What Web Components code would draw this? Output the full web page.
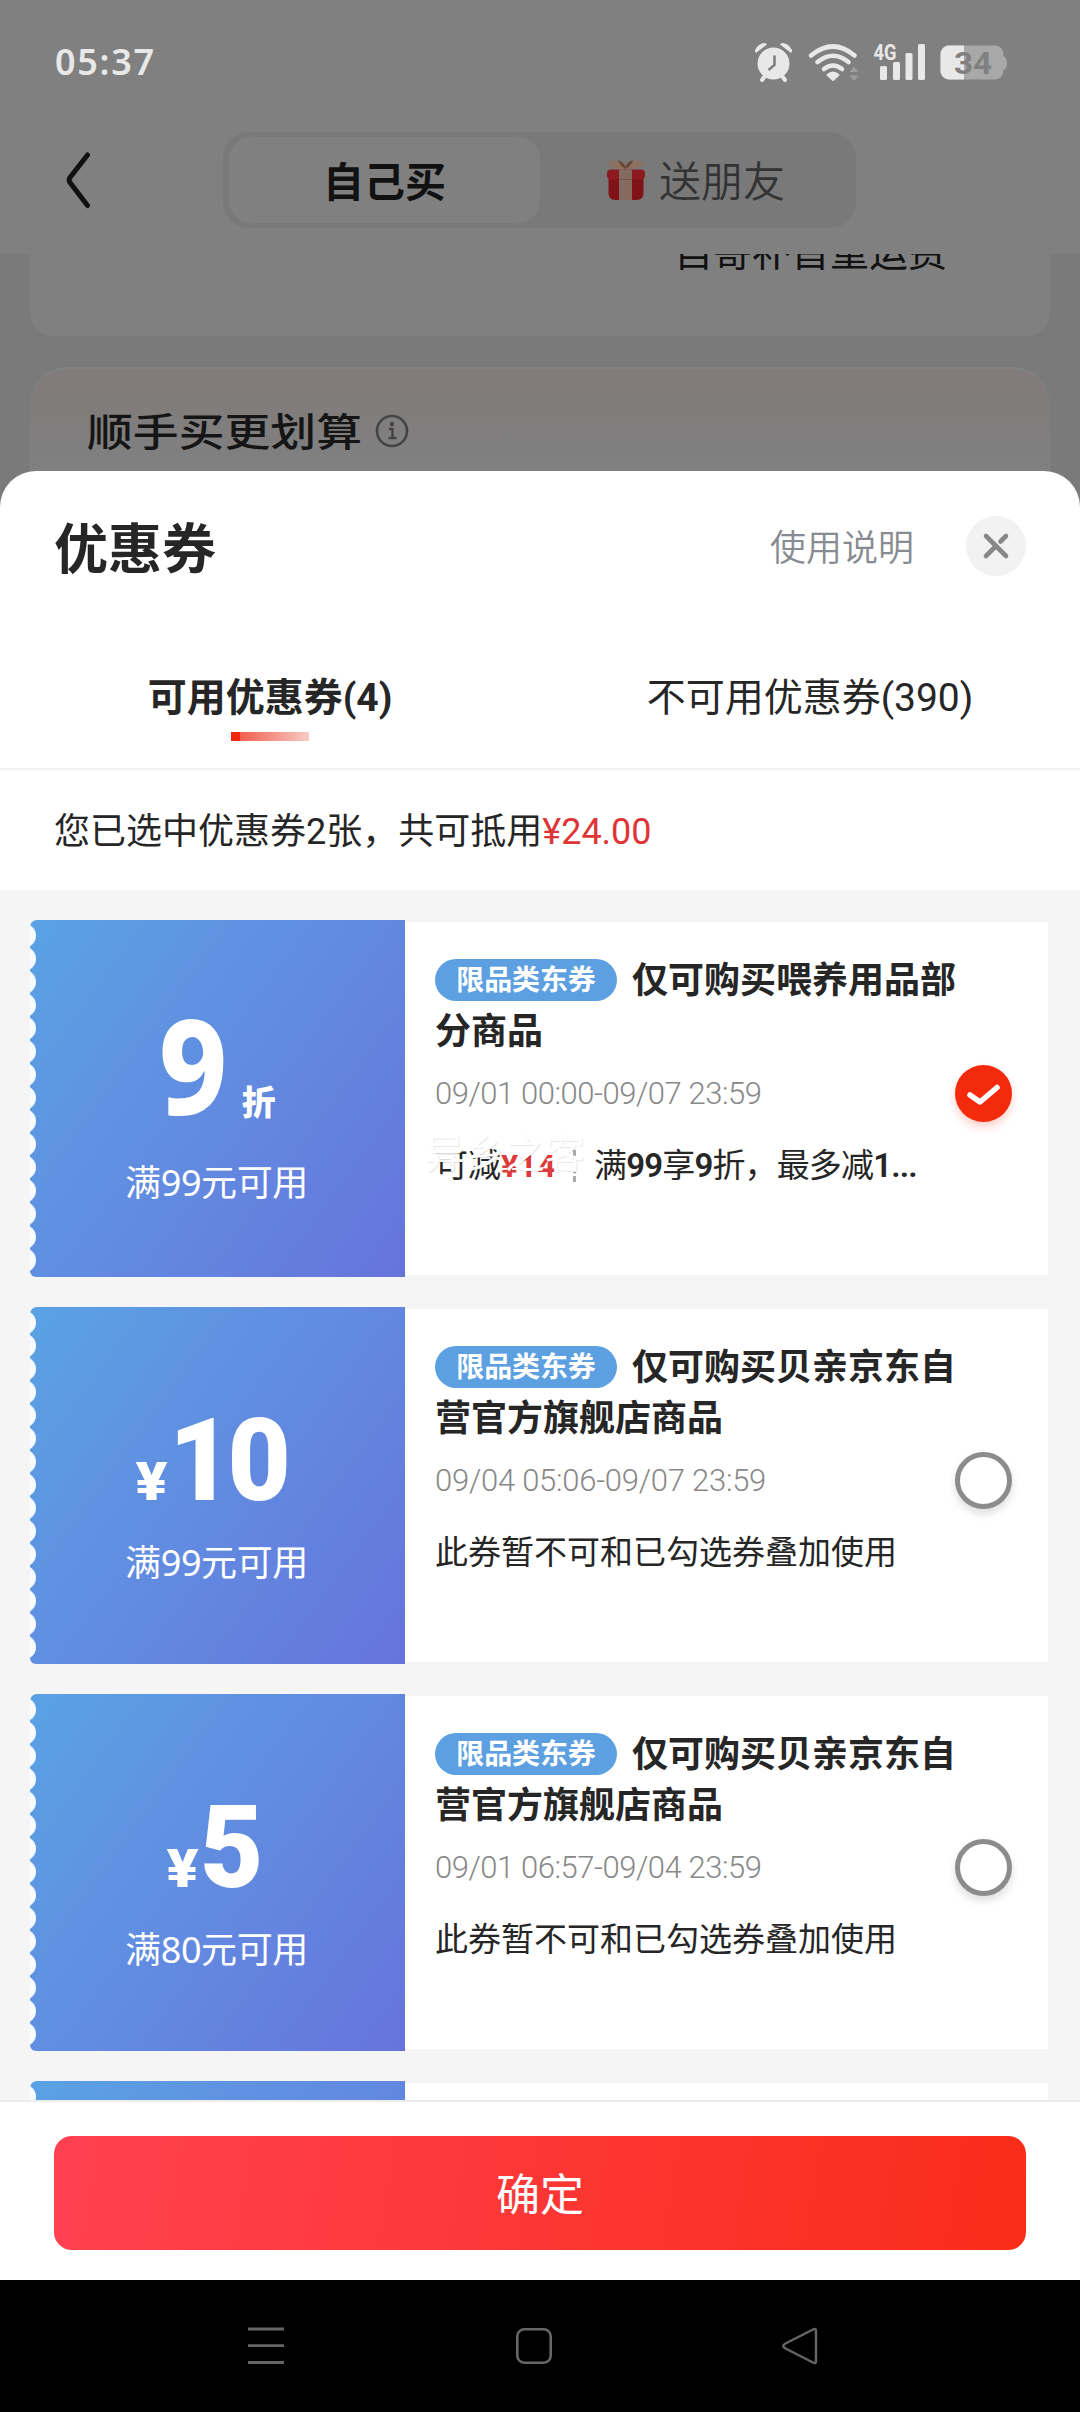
<!DOCTYPE html>
<html lang="zh-CN">
<head>
<meta charset="utf-8">
<title>优惠券</title>
<style>
html,body{margin:0;padding:0;background:#000}
body{width:1080px;height:2412px;overflow:hidden;font-family:Roboto,"Noto Sans CJK SC",sans-serif;color:#262626}
</style>
</head>
<body>
<coupon-app></coupon-app>
<script>
const define=(name,html,setup)=>{
  const t=document.createElement('template');
  t.innerHTML=html;
  customElements.define(name,class extends HTMLElement{
    constructor(){super();this.attachShadow({mode:'open'}).append(t.content.cloneNode(true));}
    connectedCallback(){if(setup)setup(this,this.shadowRoot);}
  });
};

define('status-bar',`
<style>
:host{display:flex;align-items:center;justify-content:space-between;height:124px;padding:0 73px 0 55px;box-sizing:border-box;color:#e8e8e8}
.time{font:600 36px/40px "Noto Sans",sans-serif;letter-spacing:1.7px}
.icons{display:flex;gap:15px;align-items:center}
svg{display:block;overflow:visible}
</style>
<span class="time">05:37</span>
<div class="icons">
<svg width="38" height="40" viewBox="754 42 38 40"><g fill="#e8e8e8"><circle cx="772.5" cy="63.500" r="16"/><path d="M755 53 a3 3 0 0 1-.8-3.200 q3-6 9-6.800 a3 3 0 0 1 2.800 1.500z M790 53 a3 3 0 0 0 .8-3.200 q-3-6-9-6.800 a3 3 0 0 0-2.800 1.500z"/></g><path d="M764 76 l-3 4 M781 76 l3 4" stroke="#e8e8e8" stroke-width="4" stroke-linecap="round"/><path d="M773.500 55.500 V65 L767.500 70" fill="none" stroke="#808080" stroke-width="2.600"/></svg>
<svg width="51" height="40" viewBox="808 42 51 40"><g fill="none" stroke="#e8e8e8" stroke-width="4.600" stroke-linecap="round"><path d="M811 55.500 Q833 37.500 854.500 55.500"/><path d="M817.500 62 Q833 49.500 848.500 62"/><path d="M824 69 Q833 62 842 69"/></g><path d="M833 80 L827.500 75 Q833 70 838.500 75z" fill="#e8e8e8" stroke="#e8e8e8" stroke-width="2" stroke-linejoin="round"/><path d="M849.500 72 l4.500-5.500 4.500 5.500z M849.500 75.500 l4.500 5.500 4.500-5.500z" fill="#9d9d9d"/></svg>
<svg width="51" height="40" viewBox="873 42 51 40" fill="#e8e8e8"><text x="872.500" y="60" font-family="Roboto,sans-serif" font-weight="700" font-size="22.500" textLength="23" lengthAdjust="spacingAndGlyphs">4G</text><rect x="879" y="66" width="7" height="14" rx="1.500"/><rect x="892" y="62" width="7" height="18" rx="1.500"/><rect x="904.500" y="53" width="7" height="27" rx="1.500"/><rect x="917" y="44" width="7" height="36" rx="1.500"/></svg>
<svg width="67" height="40" viewBox="940 43 67 40"><path d="M1003 57 q4 1 4 7 t-4 7z" fill="#a8a8a8"/><rect x="940.500" y="46.500" width="63" height="34" rx="8.500" fill="#a8a8a8"/><path d="M964 46.500 V80.500 H949 a8.500 8.500 0 0 1-8.500-8.500 V55 a8.500 8.500 0 0 1 8.500-8.500z" fill="#e8e8e8"/><text x="954" y="75" font-family="Roboto,sans-serif" font-weight="700" font-size="32" textLength="38" lengthAdjust="spacingAndGlyphs" fill="#808080">34</text></svg>
</div>`);

define('page-header',`
<style>
:host{display:flex;height:130px;padding-left:66px;box-sizing:border-box;align-items:flex-start}
.back{margin:26px 132px 0 0;display:block}
.seg{display:flex;width:633px;height:96px;margin-top:8px;border-radius:26px;background:#797979;box-sizing:border-box;padding:5px 6px}
.on{width:311px;height:86px;border-radius:22px;background:#808080;display:flex;align-items:center;justify-content:center;font-weight:700;font-size:41px;color:#111}
.off{flex:1;display:flex;align-items:center;padding-left:67px;gap:14px;font-size:42px;color:#333;font-weight:350}
.seg span{line-height:50px;margin-top:5px}
</style>
<svg class="back" width="25" height="60" viewBox="0 0 25 60"><path d="M21.500 5 L4 27.500 Q2.300 30 4 32.500 L21.500 55.500" fill="none" stroke="#111" stroke-width="5" stroke-linecap="round"/></svg>
<div class="seg"><div class="on"><span>自己买</span></div><div class="off">
<svg width="38" height="42" viewBox="0 0 38 42"><path d="M1.500 17h35v17q0 7-7 7h-21q-7 0-7-7z" fill="#801317"/><rect x="0" y="10.500" width="38" height="10" rx="4" fill="#8c1a20"/><path d="M12 10.500h13v30.500h-13z" fill="#846a60"/><path d="M12 20.500h13" stroke="#735448"/><path d="M18.500 10 Q8 11 3 7 Q0 3 4 1 Q12 1 18.500 10 Q25 1 33 1 Q38 3 35 7 Q29 11 18.500 10z" fill="#8b7064"/><path d="M18.500 10 Q13 7 11 1 Q17 3 18.500 8 Q20 3 26 1 Q24 7 18.500 10z" fill="#6e452f"/></svg>
<span>送朋友</span></div></div>`);

define('page-backdrop',`
<style>
:host{display:block;height:266px;background:#7a7a7a;padding:0 30px;box-sizing:border-box;overflow:hidden}
.ship{height:82px;background:#808080;border-radius:0 0 24px 24px;overflow:hidden;display:flex;justify-content:flex-end;padding-right:103px}
.ship span{font-size:39px;line-height:39px;height:39px;margin-top:-20px;color:#111}
.more{margin-top:31px;height:160px;border-radius:38px 38px 0 0;background:linear-gradient(#827b7b 0,#807d7d 50px,#808080 95px);border-top:2px solid #838383;box-sizing:border-box;display:flex;align-items:flex-start;padding:42px 0 0 57px}
.more span{font-size:39px;line-height:44px;font-weight:500;color:#151515;transform:scaleX(1.175);transform-origin:0 50%;width:288px;white-space:nowrap}
svg{display:block;margin-top:3px}
</style>
<div class="ship"><span>自寄补首重运费</span></div>
<div class="more"><span>顺手买更划算</span><svg width="34" height="34" viewBox="0 0 34 34"><circle cx="17" cy="17" r="15" fill="none" stroke="#444" stroke-width="2.600"/><circle cx="17" cy="10" r="2.200" fill="#444"/><path d="M14 15h3.500v9M13.500 24h8" fill="none" stroke="#444" stroke-width="2.400"/></svg></div>`);

define('sheet-header',`
<style>
:host{display:flex;height:150px;padding:0 54px 0 54px;align-items:center;box-sizing:border-box}
h1{margin:10px 0 0;font-size:54px;line-height:60px;font-weight:700;flex:1}
a{font-size:36px;line-height:40px;color:#888b91;font-weight:350;margin:6px 52px 0 0}
svg{display:block}
</style>
<h1>优惠券</h1><a>使用说明</a>
<svg width="60" height="60" viewBox="0 0 60 60"><circle cx="30" cy="30" r="30" fill="#f2f2f2"/><path d="M20 20 L40 40 M20 40 L28 32 M34.500 25.500 L40 20" stroke="#888" stroke-width="4.600" stroke-linecap="round"/></svg>`);

define('sheet-tabs',`
<style>
:host{display:flex;height:149px;border-bottom:2px solid #f1f1f1;box-sizing:border-box}
.tab{flex:1;display:flex;flex-direction:column;align-items:center;padding-top:55px;font-size:39px;line-height:44px;white-space:pre}
.on{font-weight:700}
.bar{width:78px;height:9px;margin-top:12px;background:linear-gradient(90deg,#f0250d 9px,#f2604f 9px,#f7cbc5)}
</style>
<div class="tab on"><span>可用优惠券(4)</span><div class="bar"></div></div><div class="tab"><span>不可用优惠券(390)</span></div>`);

define('coupon-summary',`
<style>
:host{display:flex;align-items:center;height:120px;padding:4px 54px 0;box-sizing:border-box;font-size:36px;line-height:42px}
::slotted(b){font-weight:400;color:#de3537}
</style><span><slot></slot></span>`);

define('coupon-check',`
<style>
:host{display:block;width:57px;height:57px;border-radius:50%;box-shadow:0 5px 8px rgba(0,0,0,.13);box-sizing:border-box;border:5px solid #8c8c8c;background:#fff}
:host([on]){border:0;background:#f42a0d;box-shadow:0 5px 8px rgba(244,42,13,.22)}
svg{display:none}
:host([on]) svg{display:block}
</style>
<svg width="57" height="57" viewBox="0 0 57 57"><path d="M15 30 L25 37 L42 22.500" fill="none" stroke="#fff" stroke-width="5.500" stroke-linecap="round" stroke-linejoin="round"/></svg>`);

define('coupon-card',`
<style>
:host{display:flex;height:357px;width:1018px;flex:none;align-items:center;position:relative}
.face{width:375px;height:357px;position:relative;box-sizing:border-box;border-radius:7px 0 0 6px;overflow:hidden;color:#fff;background:linear-gradient(126deg,#5aa2e3,#6289e0 55%,#6674db);display:flex;flex-direction:column;align-items:center;padding-top:96px}
.face::before{content:"";position:absolute;left:0;top:4.4px;width:7px;height:348px;background:radial-gradient(circle at -6.200px 11.600px,#f7fbff 11.700px,rgba(247,251,255,0) 12.700px) 0 0/7px 23.200px}
.amt{display:flex;align-items:baseline;height:116px;font-weight:700}
.num{font-size:115px;line-height:116px;font-weight:900;letter-spacing:-5px;margin-left:1px;transform:scaleX(.95);transform-origin:0 50%}
.yen{font-size:53px;line-height:53px;font-weight:900;transform:scaleX(1.12);transform-origin:100% 50%}
:host(:not([kind=discount])) .amt{margin-left:-4px}
.cond{font:400 36px/36px "Noto Sans","Noto Sans CJK SC",sans-serif;margin-top:26px;letter-spacing:-.4px;margin-left:-2px}
:host([kind=discount]) .face{padding-top:86px}
:host([kind=discount]) .num{font-family:"Noto Sans",sans-serif;font-size:132px;font-weight:800;letter-spacing:0;transform:scaleX(.9);transform-origin:100% 50%;margin-left:-8px}
:host([kind=discount]) .zhe{font-size:34px;line-height:34px;font-weight:900;margin-left:14px}
:host([kind=discount]) .cond{margin-top:43px}
.info{flex:1;height:353px;background:#fff;box-sizing:border-box;padding:34px 36px 0 30px;display:flex;flex-direction:column;position:relative}
.title{font-size:36px;line-height:51px;font-weight:700;width:540px;display:block;word-break:break-all}
.tag{display:inline-block;height:42px;width:182px;text-align:center;border-radius:21px;background:#5da0e1;color:#fff;font-size:28px;letter-spacing:-.1px;margin-right:15px;line-height:44px;vertical-align:middle;position:relative;top:-3px}
.row{display:flex;justify-content:space-between;align-items:center;height:57px;margin-top:7px}
.date{font-size:31px;font-weight:300;color:#888;white-space:pre;letter-spacing:var(--date-track,-.45px)}
.note{font-size:33px;line-height:40px;margin-top:23.500px;white-space:pre;display:block}
</style>
<div class="face"><div class="amt"></div><div class="cond"></div></div>
<div class="info"><div class="title"><span class="tag">限品类东券</span><span class="name"></span></div>
<div class="row"><span class="date"></span><coupon-check></coupon-check></div>
<div class="note"><slot></slot></div></div>`,(el,r)=>{
  const a=n=>el.getAttribute(n)||'';
  r.querySelector('.amt').innerHTML=a('kind')==='discount'
    ?'<span class="num">'+a('num')+'</span><span class="zhe">折</span>'
    :'<span class="yen">¥</span><span class="num">'+a('num')+'</span>';
  r.querySelector('.cond').textContent=a('cond');
  r.querySelector('.name').textContent=a('name');
  r.querySelector('.date').textContent=a('date');
  if(el.hasAttribute('checked'))r.querySelector('coupon-check').setAttribute('on','');
});

define('saving-note',`
<style>
:host{display:flex;position:relative;align-items:center;height:40px}
b{font-weight:600}
.r{color:#e0393b;font-weight:700;font-size:32px;letter-spacing:.4px}
.t{letter-spacing:-.85px}
i{display:block;width:0;height:32px;border-left:3px dashed #aaa;margin:0 18px 0 17px}
.mark{position:absolute;left:-10px;top:-16px;font-size:40px;line-height:50px;font-weight:400;color:#fff;text-shadow:1px 1px 1px rgba(0,0,0,.1)}
</style>
<span>可减</span><b class="r">¥14</b><i></i><span class="t">满<b>99</b>享<b>9</b>折，最多减<b>1...</b></span><span class="mark">异乡之客</span>`);

define('confirm-bar',`
<style>
:host{display:flex;height:180px;background:#fff;border-top:2px solid #ececec;box-sizing:border-box;padding:34px 54px 30px}
button{flex:1;border:0;border-radius:18px;background:linear-gradient(100deg,#ff4150,#fa2c19);color:#fff;font:400 44px/50px "Noto Sans CJK SC",sans-serif;padding:0 0 2px}
</style><button>确定</button>`);

define('nav-bar',`
<style>
:host{display:flex;height:132px;background:#000;align-items:center;padding-left:246px;box-sizing:border-box;gap:228px}
svg{display:block}
svg:last-child{margin-left:-1px}
</style>
<svg width="40" height="40" viewBox="0 0 40 40"><path d="M2 3h36M2 19.700h36M2 36.500h36" stroke="#666" stroke-width="2.800"/></svg>
<svg width="40" height="40" viewBox="0 0 40 40"><rect x="3.300" y="3.300" width="33.400" height="33.400" rx="7" fill="none" stroke="#666" stroke-width="2.600"/></svg>
<svg width="40" height="40" viewBox="0 0 40 40"><path d="M32 3.500 Q35 2 35 5 V35 Q35 38 32 36.500 L4.500 22.500 Q0 20 4.500 17.500z" fill="none" stroke="#666" stroke-width="2.500"/></svg>`);

define('coupon-app',`
<style>
:host{display:flex;flex-direction:column;height:2412px;background:#808080}
.sheet{margin-top:-49px;height:1809px;background:#fff;border-radius:36px 36px 0 0;display:flex;flex-direction:column;overflow:hidden;position:relative}
.list{flex:1;min-height:0;overflow:hidden;background:#f5f5f5;display:flex;flex-direction:column;gap:30px;padding:30px 0 0 30px;box-sizing:border-box}
.wide{--date-track:-.25px}
</style>
<status-bar></status-bar><page-header></page-header><page-backdrop></page-backdrop>
<div class="sheet">
<sheet-header></sheet-header><sheet-tabs></sheet-tabs>
<coupon-summary>您已选中优惠券2张，共可抵用<b>¥24.00</b></coupon-summary>
<div class="list">
<coupon-card kind="discount" num="9" cond="满99元可用" name="仅可购买喂养用品部分商品" date="09/01 00:00-09/07 23:59" checked><saving-note></saving-note></coupon-card>
<coupon-card class="wide" num="10" cond="满99元可用" name="仅可购买贝亲京东自营官方旗舰店商品" date="09/04 05:06-09/07 23:59">此券暂不可和已勾选券叠加使用</coupon-card>
<coupon-card num="5" cond="满80元可用" name="仅可购买贝亲京东自营官方旗舰店商品" date="09/01 06:57-09/04 23:59">此券暂不可和已勾选券叠加使用</coupon-card>
<coupon-edge></coupon-edge>
</div>
<confirm-bar></confirm-bar>
</div>
<nav-bar></nav-bar>`);

define('coupon-edge',`
<style>
:host{display:flex;width:1018px;height:357px;flex:none;align-items:center}
.f{width:375px;height:357px;position:relative;border-radius:7px 0 0 0;overflow:hidden;background:linear-gradient(126deg,#5aa2e3,#6289e0 55%,#6674db)}
.f::before{content:"";position:absolute;left:0;top:4.4px;width:7px;height:348px;background:radial-gradient(circle at -6.200px 11.600px,#f7fbff 11.700px,rgba(247,251,255,0) 12.700px) 0 0/7px 23.200px}
.w{flex:1;height:353px;background:#fff}
</style><div class="f"></div><div class="w"></div>`);
</script>
</body>
</html>
